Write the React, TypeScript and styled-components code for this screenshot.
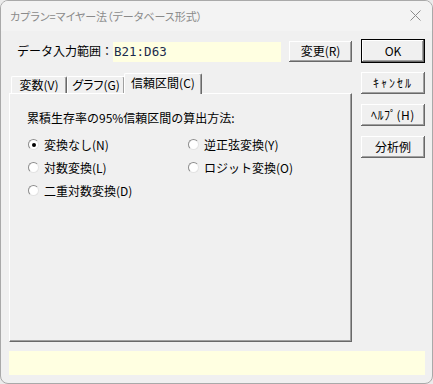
import React from "react";
import styled, { createGlobalStyle } from "styled-components";

const GlobalStyle = createGlobalStyle`
  html, body {
    margin: 0;
    padding: 0;
    background: #ebebeb;
  }
  body {
    font-family: "Noto Sans CJK JP", "Noto Sans", sans-serif;
    font-size: 12px;
    color: #000;
  }
`;

const methods = [
  { label: "変換なし(N)", checked: true },
  { label: "逆正弦変換(Y)", checked: false },
  { label: "対数変換(L)", checked: false },
  { label: "ロジット変換(O)", checked: false },
  { label: "二重対数変換(D)", checked: false },
];

const tabs = [
  { label: "変数(V)", width: 56 },
  { label: "グラフ(G)", width: 58 },
  { label: "信頼区間(C)", width: 78, active: true },
];

// the dialog uses half-width katakana on these buttons
const sideButtons = [
  { label: "ｷｬﾝｾﾙ", tracking: 2 },
  { label: "ﾍﾙﾌﾟ(H)", tracking: 0.5 },
  { label: "分析例", tracking: 0 },
];

export default function App() {
  return (
    <>
      <GlobalStyle />
      <SC.Window>
        <SC.TitleBar>
          <SC.Title>カプラン=マイヤー法（データベース形式）</SC.Title>
          <SC.Close>
            <svg width="11" height="11" viewBox="0 0 11 11">
              <path d="M0.5 0.5 L10.5 10.5 M10.5 0.5 L0.5 10.5" stroke="#8c8c8c" strokeWidth="1" fill="none" />
            </svg>
          </SC.Close>
        </SC.TitleBar>
        <SC.Body>
          <SC.Main>
            <SC.RangeRow>
              <SC.RangeLabel>データ入力範囲：</SC.RangeLabel>
              <SC.RangeField>B21:D63</SC.RangeField>
              <SC.Button $width={63} $height={21}>変更(R)</SC.Button>
            </SC.RangeRow>
            <SC.TabStrip>
              {tabs.map((t) => (
                <SC.Tab key={t.label} $active={!!t.active} $width={t.width}>
                  {t.label}
                </SC.Tab>
              ))}
            </SC.TabStrip>
            <SC.Panel>
              <SC.Heading>累積生存率の95%信頼区間の算出方法:</SC.Heading>
              <SC.RadioGrid>
                {methods.map((m) => (
                  <SC.RadioItem key={m.label}>
                    <SC.RadioDot $checked={m.checked} />
                    <span>{m.label}</span>
                  </SC.RadioItem>
                ))}
              </SC.RadioGrid>
            </SC.Panel>
          </SC.Main>
          <SC.Side>
            <SC.Button $width={64} $height={24} $default>OK</SC.Button>
            {sideButtons.map((b) => (
              <SC.Button key={b.label} $width={64} $height={22} $tracking={b.tracking}>
                {b.label}
              </SC.Button>
            ))}
          </SC.Side>
          <SC.StatusField />
        </SC.Body>
      </SC.Window>
    </>
  );
}

const SC = {
  Window: styled.div`
    width: 433px;
    height: 384px;
    box-sizing: border-box;
    border: 1px solid #a9a9a9;
    border-radius: 8px;
    overflow: hidden;
    background: #f0f0f0;
    display: flex;
    flex-direction: column;
  `,
  TitleBar: styled.div`
    height: 30px;
    background: #f3f3f3;
    display: flex;
    align-items: center;
    justify-content: space-between;
    padding: 0 10px 0 9px;
  `,
  Title: styled.div`
    color: #8a8a8a;
    font-size: 11px;
    font-feature-settings: "palt";
    margin-top: -1px;
  `,
  Close: styled.div`
    display: flex;
    margin-right: 1px;
    margin-top: -2px;
  `,
  Body: styled.div`
    display: grid;
    grid-template-columns: 343px 64px;
    column-gap: 9px;
    padding: 8px 7px 0 8px;
  `,
  Main: styled.div`
    display: flex;
    flex-direction: column;
  `,
  RangeRow: styled.div`
    height: 24px;
    display: flex;
    align-items: center;
  `,
  RangeLabel: styled.div`
    width: 96px;
    padding-left: 8px;
    font-size: 12px;
    line-height: 14px;
    white-space: nowrap;
  `,
  RangeField: styled.div`
    width: 168px;
    height: 20px;
    background: #ffffe1;
    color: #1c2b4d;
    font-family: "DejaVu Sans Mono", "Liberation Mono", monospace;
    font-size: 12.5px;
    line-height: 20px;
    padding-left: 1px;
    box-sizing: border-box;
    margin-right: 8px;
    margin-top: 2px;
  `,
  Button: styled.div<{ $width: number; $height: number; $default?: boolean; $tracking?: number }>`
    width: ${(p) => p.$width}px;
    height: ${(p) => p.$height}px;
    box-sizing: border-box;
    display: flex;
    align-items: center;
    justify-content: center;
    font-size: 12px;
    line-height: 14px;
    letter-spacing: ${(p) => p.$tracking ?? 0}px;
    background: #f0f0f0;
    border: ${(p) => (p.$default ? "1px solid #000" : "none")};
    box-shadow: inset -1px -1px #696969, inset 1px 1px #ffffff, inset -2px -2px #a0a0a0;
  `,
  TabStrip: styled.div`
    display: flex;
    align-items: flex-end;
    margin-top: 10px;
    padding-left: 2px;
    height: 20px;
    position: relative;
    z-index: 1;
  `,
  Tab: styled.div<{ $active: boolean; $width: number }>`
    width: ${(p) => p.$width}px;
    height: ${(p) => (p.$active ? 21 : 17)}px;
    margin: ${(p) => (p.$active ? "0 0 -1px -1px" : "0")};
    box-sizing: border-box;
    background: #f0f0f0;
    border-top: 1px solid #fff;
    border-left: 1px solid #fff;
    border-right: 1px solid #696969;
    border-radius: 2px 2px 0 0;
    box-shadow: inset -1px 0 #a0a0a0;
    display: flex;
    align-items: flex-start;
    justify-content: center;
    padding-top: ${(p) => (p.$active ? 2 : 1)}px;
    font-size: 12px;
    line-height: 14px;
    font-feature-settings: "palt";
  `,
  Panel: styled.div`
    height: 249px;
    box-sizing: border-box;
    border-top: 1px solid #fff;
    border-left: 1px solid #fff;
    border-right: 1px solid #696969;
    border-bottom: 1px solid #696969;
    box-shadow: inset -1px -1px #a0a0a0;
    padding: 16px 0 0 17px;
  `,
  Heading: styled.div`
    font-size: 12px;
    line-height: 16px;
  `,
  RadioGrid: styled.div`
    display: grid;
    grid-template-columns: 160px 160px;
    grid-auto-rows: 23px;
    margin-top: 7px;
  `,
  RadioItem: styled.div`
    display: flex;
    align-items: center;
    gap: 5px;
    font-size: 12px;
    line-height: 14px;
    padding-left: 1px;
  `,
  RadioDot: styled.span<{ $checked: boolean }>`
    width: 11px;
    height: 11px;
    box-sizing: border-box;
    border-radius: 50%;
    background: #fff;
    border: 1px solid;
    border-color: #8c8c8c #e3e3e3 #e3e3e3 #8c8c8c;
    display: flex;
    align-items: center;
    justify-content: center;
    &::after {
      content: "";
      width: 4px;
      height: 4px;
      border-radius: 50%;
      background: ${(p) => (p.$checked ? "#000" : "transparent")};
    }
  `,
  Side: styled.div`
    display: flex;
    flex-direction: column;
    gap: 10px;
    & > :first-child {
      margin-bottom: -1px;
    }
  `,
  StatusField: styled.div`
    grid-column: 1 / span 2;
    margin-top: 9px;
    height: 24px;
    background: #ffffe1;
  `,
};
